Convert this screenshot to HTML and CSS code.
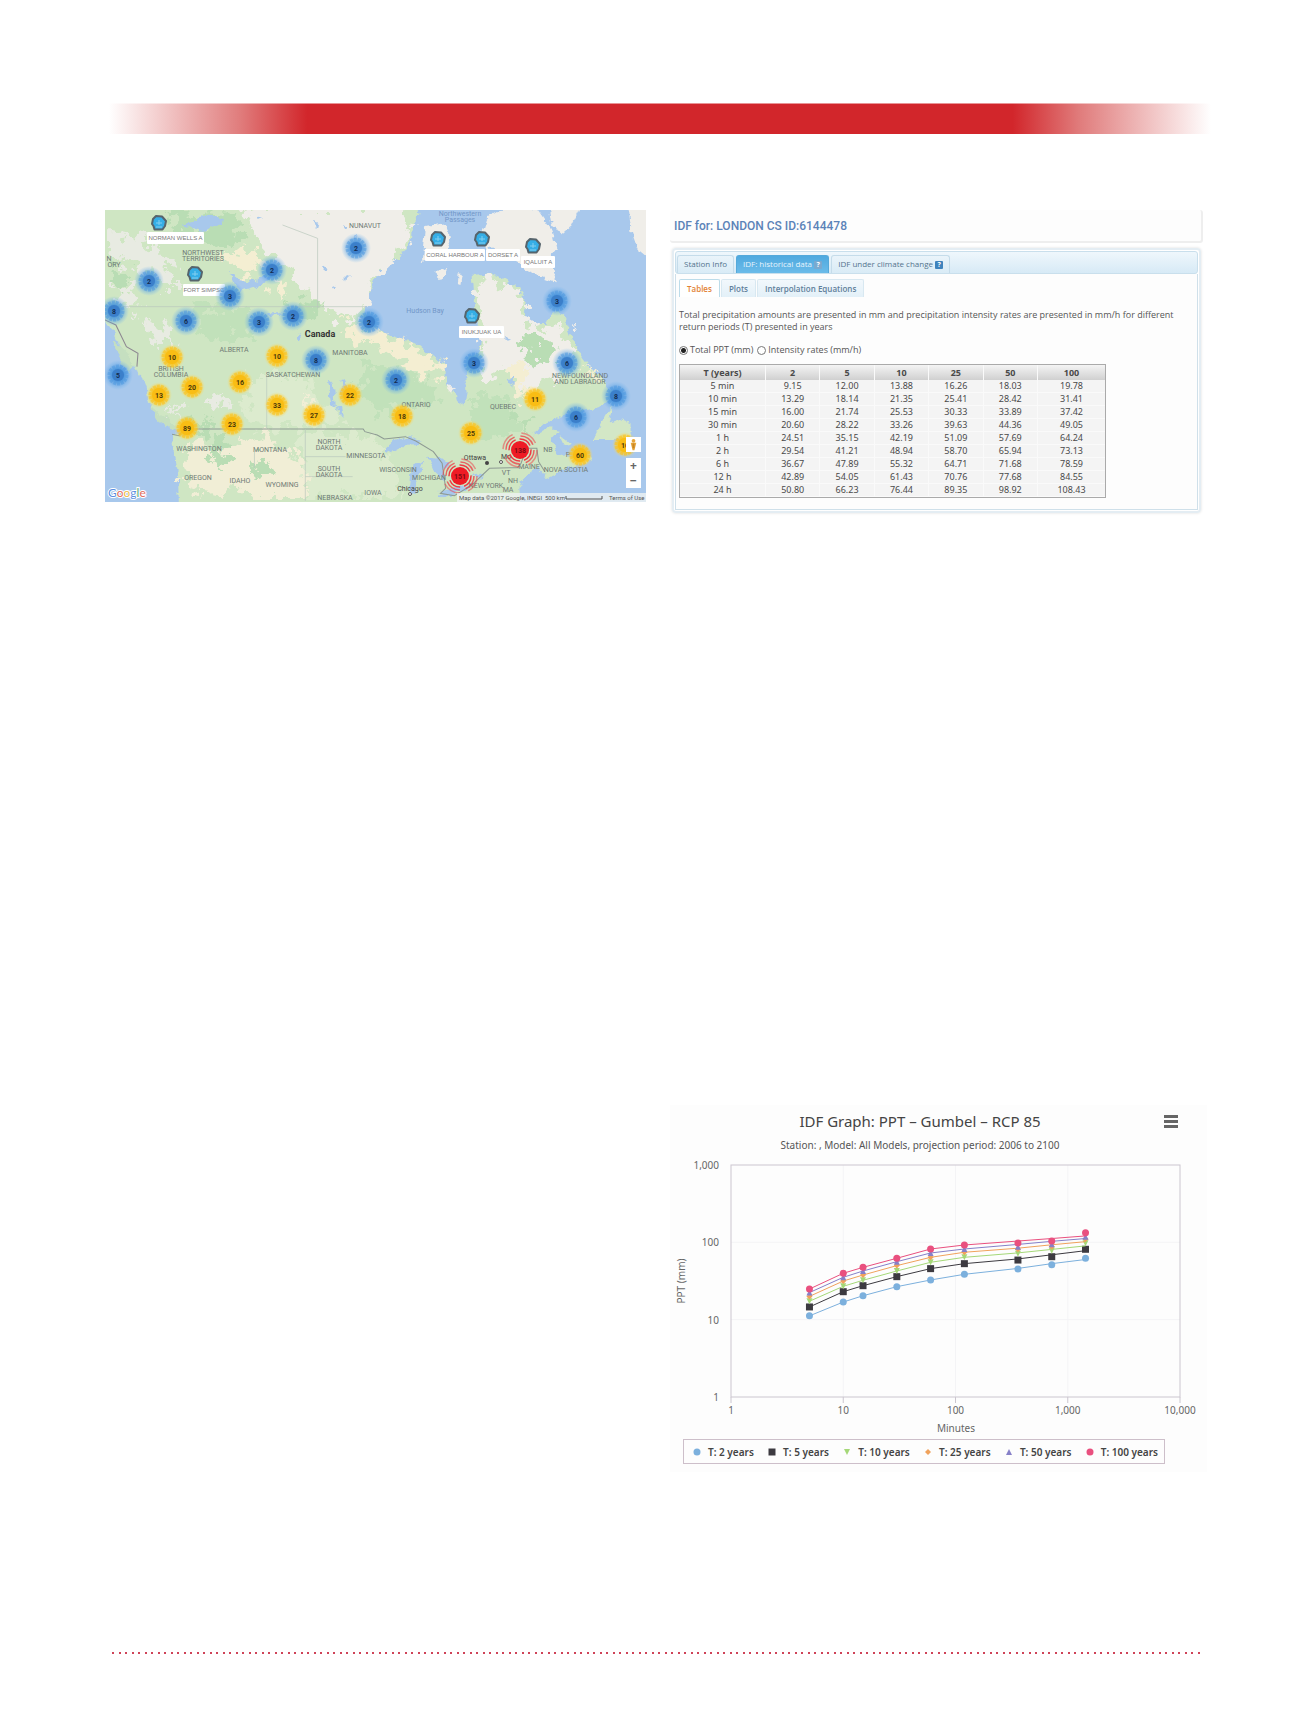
FILE: index.html
```
<!DOCTYPE html>
<html lang="en">
<head>
    <meta charset="utf-8">
    <title>IDF Tool</title>
    <link rel="stylesheet" href="styles.css">
</head>
<body>
    <div class="banner"></div>

    <main class="content">
        <div class="map">
            <svg class="map-canvas" id="map" viewBox="0 0 541 292" role="img" aria-label="Station map">
                <defs>
                    <filter id="rough" x="0" y="0" width="100%" height="100%">
                        <feTurbulence type="fractalNoise" baseFrequency="0.12" numOctaves="3" seed="4"/>
                        <feDisplacementMap in="SourceGraphic" scale="9" xChannelSelector="R" yChannelSelector="G"/>
                    </filter>
                    <filter id="patchy" x="0" y="0" width="100%" height="100%">
                        <feTurbulence type="fractalNoise" baseFrequency="0.09" numOctaves="4" seed="9"/>
                        <feDisplacementMap in="SourceGraphic" scale="34" xChannelSelector="R" yChannelSelector="G"/>
                        <feGaussianBlur stdDeviation="0.5"/>
                    </filter>
                    <radialGradient id="glow-blue">
                        <stop offset="0.4" stop-color="#3f8fdb" stop-opacity="0.9"/>
                        <stop offset="1" stop-color="#6fb4f0" stop-opacity="0"/>
                    </radialGradient>
                    <radialGradient id="glow-yellow">
                        <stop offset="0.5" stop-color="#fbc31c"/>
                        <stop offset="1" stop-color="#fcd95c" stop-opacity="0"/>
                    </radialGradient>
                </defs>

                <rect width="541" height="292" fill="#a8c8ec"/>

                <g filter="url(#rough)">
                    <g transform="scale(.3508 .3333) translate(-14 -15)">
                        <path fill="#cfe6c3" d="M-20 -20H880L915 25L890 60L885 110L860 150L820 180L790 210L770 255L755 300L760 345L800 378L850 405L900 415L940 450L985 480L985 540L1012 560L1022 600L1042 595L1048 560L1040 510L1046 460L1082 440L1090 395L1070 350L1068 280L1062 210L1110 205L1150 225L1190 250L1215 285L1208 325L1235 360L1272 360L1300 318L1325 340L1342 390L1362 440L1392 480L1430 520L1475 570L1440 600L1390 615L1310 635L1255 660L1232 695L1280 668L1310 675L1285 705L1300 740L1340 760L1395 745L1400 765L1330 790L1275 822L1250 785L1215 810L1195 850L1200 920H225L222 800L208 730L205 690L240 688L190 650L140 600L130 540L100 490L60 430L35 370L-20 330Z"/>
                        <path fill="#f0eee9" d="M1100 40L1150 10H1245L1290 80L1302 130L1280 160L1302 232L1240 208L1190 170L1110 130L1085 90ZM1280 0H1372L1345 60L1310 92L1290 60ZM1505 0H1600V200L1535 140L1515 80ZM930 62L985 55L1000 90L985 150L920 165ZM950 205L990 188L972 225ZM1022 208L1034 210L1030 234L1020 230ZM990 540L1015 548L1000 560Z"/>
                        <path fill="#d3e7c6" d="M1462 600L1440 630L1405 705L1480 705L1515 690L1515 655L1480 640L1450 650ZM1310 690L1345 720L1325 725Z"/>
                        <path fill="#c5dfc0" d="M35 400L75 440L100 490L80 500L50 450ZM145 605L190 640L235 680L200 672L160 640Z"/>
                    </g>
                </g>

                <g filter="url(#patchy)">
                    <g transform="scale(.3508 .3333) translate(-14 -15)">
                        <path fill="#f0eee9" d="M410 0H870L880 110L850 150L790 210L765 255L745 345L690 350L640 310L580 260L520 180L450 100ZM1075 225L1110 215L1150 240L1200 270L1205 330L1240 375L1290 360L1320 350L1340 430L1360 470L1290 520L1220 560L1170 490L1100 520L1060 500L1100 440L1085 350Z"/>
                        <path fill="#e8ebe2" d="M20 80L110 90L150 130L200 180L230 240L170 240L110 180L60 160L20 150ZM40 240L110 270L100 300L50 290ZM110 330L190 370L220 420L160 420ZM310 560L370 580L350 620L310 600ZM190 600L240 630L220 640Z"/>
                        <path fill="#f4eed2" d="M345 140L440 145L470 200L440 222L390 200ZM490 225L530 235L520 290L500 260ZM690 360L770 365L860 410L970 475L975 510L890 500L780 420L700 400ZM1170 470L1220 480L1210 590L1180 580ZM1370 480L1430 525L1400 520Z"/>
                        <path fill="#dcebce" d="M420 510L560 510L640 590L700 660L420 665ZM560 690L760 690L850 780L850 880L600 880Z"/>
                        <path fill="#f1eed6" d="M250 710L330 720L400 730L420 700L470 690L560 760L590 800L585 885L450 885L400 850L300 870L250 850L240 780ZM560 560L620 600L600 620Z"/>
                        <path fill="#b9ddb4" d="M200 20L390 30L400 110L330 130L290 90L220 80ZM20 180L80 190L90 240L30 240ZM320 690L360 690L350 780L310 760ZM430 760L480 770L470 830L430 820ZM1190 410L1280 400L1300 460L1230 480ZM540 290L640 300L620 340L560 330ZM240 640L320 650L300 690L240 680ZM1180 640L1240 640L1210 690Z"/>
                        <path fill="#c1e1ba" d="M760 470L940 520L960 600L800 620L740 560ZM1060 560L1170 580L1190 680L1060 700ZM260 300L440 310L420 400L280 400Z"/>
                    </g>
                </g>

                <!-- lakes -->
                <g filter="url(#rough)">
                    <g transform="scale(.3508 .3333) translate(-14 -15)" fill="#a8c8ec">
                        <path d="M235 60L280 45L290 30L335 30L350 55L320 65L300 80L260 68ZM370 200L400 225L440 232L470 205L490 215L450 245L405 260L385 240ZM650 520L665 530L672 600L660 610ZM685 520L700 530L705 575L690 570ZM675 600L690 610L695 640L680 630ZM810 735L840 705L880 690L915 700L910 720L870 722L830 745ZM885 790L925 765L915 790L905 830L900 870L880 865ZM935 755L975 760L1000 780L975 800L985 830L955 800ZM965 860L1010 850L1065 830L1050 850L1000 870L970 880ZM1060 815L1100 800L1090 818Z"/>
                        <path d="M480 325H520V332H480ZM560 395L575 380L570 405ZM640 180L650 195L636 200ZM690 60L705 70L695 78ZM610 50L625 58L615 66ZM700 210L712 218L700 226ZM780 260L770 270ZM1165 520L1180 515L1178 545ZM1150 395L1175 400L1160 405ZM450 35L465 42L452 48ZM720 90L732 96L724 102ZM660 240L670 245L664 252Z"/>
                    </g>
                </g>

                <!-- national and provincial borders -->
                <g transform="scale(.3508 .3333) translate(-14 -15)" fill="none" stroke="#8e9a93" stroke-width="3">
                    <path d="M205 688L225 692L240 672H750L755 680L790 690L810 702L870 695L900 708L950 740L975 775L985 850L970 865L1010 872L1060 840L1110 790L1190 788L1200 775L1215 730H1245L1250 770L1268 800"/>
                    <path d="M14 345L45 360L75 425L108 445L105 485" stroke="#8d8791"/>
                </g>
                <g transform="scale(.3508 .3333) translate(-14 -15)" fill="none" stroke="#b9c7bb" stroke-width="2">
                    <path d="M20 305H760M475 510V670M585 672V888M585 755H700M585 815H720M440 790V740M620 310V100L520 60"/>
                </g>

                <g id="map-labels"></g>
                <g id="stations"></g>
                <g id="clusters"></g>

                <g class="map-credit">
                    <rect x="352" y="283" width="189" height="9" fill="#eef3f3" opacity="0.8"/>
                    <text x="354" y="290">Map data ©2017 Google, INEGI</text>
                    <text x="440" y="290">500 km</text>
                    <path d="M461 286V289H497V286" fill="none" stroke="#555"/>
                    <text x="504" y="290">Terms of Use</text>
                </g>
                <text class="google" x="3" y="287"><tspan fill="#5b8fe0">G</tspan><tspan fill="#e2695c">o</tspan><tspan fill="#eebb45">o</tspan><tspan fill="#5b8fe0">g</tspan><tspan fill="#5fae73">l</tspan><tspan fill="#e2695c">e</tspan></text>
            </svg>
            <div class="map-controls">
                <button class="map-btn pegman" aria-label="Street View">
                    <svg viewBox="0 0 16 16"><circle cx="8" cy="4" r="2" fill="#e6a53a"/><path d="M5 6h6l-1 4-1 4H7L6 10z" fill="#e6a53a"/><path d="M7 7h2v5H7z" fill="#c98522"/></svg>
                </button>
                <div class="zoom">
                    <button class="map-btn" aria-label="Zoom in">+</button>
                    <button class="map-btn" aria-label="Zoom out">−</button>
                </div>
            </div>
        </div>

        <section class="idf">
            <div class="idf-title"><h2>IDF for: LONDON CS ID:6144478</h2></div>
            <div class="idf-panel">
                <div class="tabs">
                    <button class="tab">Station Info</button>
                    <button class="tab active">IDF: historical data <span class="help">?</span></button>
                    <button class="tab">IDF under climate change <span class="help">?</span></button>
                </div>
                <div class="idf-body">
                    <div class="subtabs">
                        <button class="subtab active">Tables</button>
                        <button class="subtab">Plots</button>
                        <button class="subtab">Interpolation Equations</button>
                    </div>
                    <p>Total precipitation amounts are presented in mm and precipitation intensity rates are presented in mm/h for different return periods (T) presented in years</p>
                    <div class="units">
                        <label><input type="radio" name="unit" checked>Total PPT (mm)</label>
                        <label><input type="radio" name="unit">Intensity rates (mm/h)</label>
                    </div>
                    <table>
                        <thead>
                            <tr><th class="first">T (years)</th><th>2</th><th>5</th><th>10</th><th>25</th><th>50</th><th class="last">100</th></tr>
                        </thead>
                        <tbody>
                            <tr><td>5 min</td><td>9.15</td><td>12.00</td><td>13.88</td><td>16.26</td><td>18.03</td><td>19.78</td></tr>
                            <tr><td>10 min</td><td>13.29</td><td>18.14</td><td>21.35</td><td>25.41</td><td>28.42</td><td>31.41</td></tr>
                            <tr><td>15 min</td><td>16.00</td><td>21.74</td><td>25.53</td><td>30.33</td><td>33.89</td><td>37.42</td></tr>
                            <tr><td>30 min</td><td>20.60</td><td>28.22</td><td>33.26</td><td>39.63</td><td>44.36</td><td>49.05</td></tr>
                            <tr><td>1 h</td><td>24.51</td><td>35.15</td><td>42.19</td><td>51.09</td><td>57.69</td><td>64.24</td></tr>
                            <tr><td>2 h</td><td>29.54</td><td>41.21</td><td>48.94</td><td>58.70</td><td>65.94</td><td>73.13</td></tr>
                            <tr><td>6 h</td><td>36.67</td><td>47.89</td><td>55.32</td><td>64.71</td><td>71.68</td><td>78.59</td></tr>
                            <tr><td>12 h</td><td>42.89</td><td>54.05</td><td>61.43</td><td>70.76</td><td>77.68</td><td>84.55</td></tr>
                            <tr><td>24 h</td><td>50.80</td><td>66.23</td><td>76.44</td><td>89.35</td><td>98.92</td><td>108.43</td></tr>
                        </tbody>
                    </table>
                </div>
            </div>
        </section>

        <section class="chart">
            <button class="chart-menu" aria-label="Chart menu"><span></span><span></span><span></span></button>
            <h3>IDF Graph: PPT – Gumbel – RCP 85</h3>
            <p class="subtitle">Station: , Model: All Models, projection period: 2006 to 2100</p>
            <svg class="plot" id="plot" viewBox="0 0 537 280" role="img" aria-label="IDF graph"></svg>
            <ul class="legend" id="legend"></ul>
        </section>
    </main>

    <footer class="dots"></footer>

    <script src="script.js"></script>
</body>
</html>
```
FILE: styles.css
```
* {
    margin: 0;
    padding: 0;
    box-sizing: border-box;
}

body {
    font-family: "Open Sans", "Noto Sans", sans-serif;
    background: #fff;
    color: #555;
    padding: 103px 92px 0 105px;
}

button {
    font: inherit;
    color: inherit;
    border: none;
    background: none;
    cursor: pointer;
}

.banner {
    height: 31px;
    margin: 0 -4px 76px 4px;
    border-top: 1px solid rgba(255, 255, 255, 0.5);
    background: linear-gradient(90deg, #fff, #e07b7b 12%, #d2262b 18%, #d2262b 82%, #e07b7b 88%, #fff);
}

.content {
    display: grid;
    grid-template-columns: 541fr 537fr;
    column-gap: 24px;
    row-gap: 592px;
    align-items: start;
}

/* Map */
.map {
    position: relative;
    overflow: hidden;
}

.map-canvas {
    display: block;
    width: 100%;
    font-family: Roboto, sans-serif;
}

.map-label {
    font-size: 7px;
    fill: #6f7a75;
    text-anchor: middle;
}

.map-label.city {
    fill: #444;
}

.map-label.country {
    font-size: 9px;
    font-weight: bold;
    fill: #333;
}

.map-label.water {
    fill: #7297c8;
}

.cluster {
    font-size: 7px;
    font-weight: bold;
    text-anchor: middle;
}

.station {
    font-family: "Liberation Sans", sans-serif;
    font-size: 6px;
    fill: #777;
    text-anchor: middle;
}

.map-credit {
    font-size: 6px;
    fill: #555;
}

.google {
    font-family: Lato, sans-serif;
    font-size: 12px;
    stroke: #fff;
    stroke-width: 2px;
    paint-order: stroke;
}

.map-controls {
    position: absolute;
    right: 5px;
    bottom: 14px;
    display: flex;
    flex-direction: column;
    gap: 6px;
}

.map-btn {
    display: block;
    width: 15px;
    height: 15px;
    line-height: 15px;
    background: #fff;
    font-size: 12px;
    font-weight: bold;
    color: #666;
    text-align: center;
}

.pegman svg {
    display: block;
}

/* Station panel */
.idf-title {
    height: 33px;
    padding: 6px 4px;
    margin-right: 4px;
    background: #fdfdfd;
    border-right: 2px solid #eee;
    border-bottom: 2px solid #eee;
    border-radius: 3px;
}

.idf-title h2 {
    font-family: Roboto, sans-serif;
    font-size: 12px;
    font-weight: 500;
    line-height: 20px;
    color: #5b83b8;
}

.idf-panel {
    margin: 5px 6px 0 2px;
    border: 2px solid #e4edf3;
    border-radius: 4px;
    box-shadow: 0 0 3px #ddd;
    padding: 1px;
}

.tabs {
    display: flex;
    gap: 2px;
    height: 23px;
    padding: 3px 1px 0;
    background: linear-gradient(#eff7fc, #d7eaf6);
    border: 1px solid #c9dfec;
    border-radius: 3px;
    font-size: 8px;
    color: #54748e;
}

.tab {
    padding: 0 6px 3px;
    border: 1px solid #c5dcea;
    border-bottom: none;
    border-radius: 3px 3px 0 0;
    background: linear-gradient(#eaf4fa, #d9ebf6);
    white-space: nowrap;
}

.tab.active {
    background: linear-gradient(#4fa9df, #6bbbe9);
    border-color: #55a9da;
    color: #e5f4fd;
}

.help {
    display: inline-block;
    width: 8px;
    height: 8px;
    line-height: 8px;
    border-radius: 1px;
    background: #3f83bd;
    color: #fff;
    font-size: 7px;
    font-weight: bold;
    text-align: center;
}

.tab.active .help {
    background: #7aa9cf;
}

.idf-body {
    padding: 5px 7px 11px 3px;
    border: 1px solid #cfe0ea;
    border-top: none;
    background: #fdfdfd;
}

.subtabs {
    display: flex;
    gap: 1px;
    margin-bottom: 12px;
    font-size: 8px;
    font-weight: 600;
    color: #5f7f9b;
}

.subtab {
    height: 18px;
    padding: 0 7px;
    border: 1px solid #d8e8f1;
    border-bottom: none;
    border-radius: 2px 2px 0 0;
    background: linear-gradient(#f2f8fc, #e3f0f8);
}

.subtab.active {
    background: #fff;
    border-color: #bcdcea;
    color: #e28234;
}

.idf-body p {
    font-size: 9px;
    line-height: 12px;
    margin-bottom: 11px;
}

.units {
    display: flex;
    gap: 4px;
    height: 12px;
    margin-bottom: 8px;
    font-size: 9px;
    line-height: 12px;
}

.units label {
    display: flex;
    align-items: center;
    gap: 2px;
}

.units input {
    appearance: none;
    width: 9px;
    height: 9px;
    border: 1px solid #777;
    border-radius: 50%;
    background: #fff;
}

.units input:checked {
    background: radial-gradient(#222 0 2px, #fff 3px);
}

table {
    width: 427px;
    max-width: 100%;
    table-layout: fixed;
    border: 1px solid #aaa;
    border-collapse: separate;
    border-spacing: 0;
    font-family: "Noto Sans", sans-serif;
    font-size: 9px;
    text-align: center;
    color: #4a4a4a;
}

th {
    height: 15px;
    line-height: 14px;
    background: linear-gradient(#f4f4f4, #d0d0d0);
}

.first {
    width: 20%;
}

.last {
    width: 16%;
}

td {
    height: 13px;
    line-height: 12px;
    background: #f4f4f4;
    border-bottom: 1px solid #fafafa;
}

td + td,
th + th {
    border-left: 1px solid #fafafa;
}

/* Chart */
.chart {
    grid-column: 2;
    position: relative;
    padding-top: 4px;
    font-family: "Noto Sans", sans-serif;
    background: #fdfdfd;
}

.chart h3 {
    padding-right: 37px;
    font-size: 15px;
    font-weight: normal;
    line-height: 24px;
    text-align: center;
    color: #444;
}

.subtitle {
    padding-right: 37px;
    font-size: 10px;
    line-height: 24px;
    text-align: center;
    color: #555;
}

.chart-menu {
    position: absolute;
    top: 10px;
    right: 29px;
    display: flex;
    flex-direction: column;
    gap: 2px;
    width: 14px;
}

.chart-menu span {
    height: 3px;
    background: #666;
}

.plot {
    display: block;
    width: 100%;
}

.plot text {
    font-size: 10px;
    fill: #666;
}

.legend {
    display: flex;
    justify-content: space-between;
    width: 482px;
    max-width: 100%;
    height: 25px;
    margin: 2px 0 8px 13px;
    padding: 0 6px 0 8px;
    border: 1px solid #cdbfca;
    list-style: none;
    font-size: 10px;
    font-weight: 600;
    color: #444;
}

.legend li {
    display: flex;
    align-items: center;
    gap: 6px;
}

.legend svg {
    width: 10px;
    height: 10px;
}

.dots {
    height: 2px;
    margin: 180px 4px 60px 7px;
    background: repeating-linear-gradient(90deg, #cf4358 0 2px, #fff 2px 7px, #cf4358 7px 9px, #fff 9px 13px);
}
```
FILE: script.js
```
const mapLabels = [
    ['NUNAVUT', 260, 18], ['NORTHWEST', 98, 45], ['TERRITORIES', 98, 51],
    ['ALBERTA', 129, 142], ['MANITOBA', 245, 145], ['SASKATCHEWAN', 188, 167],
    ['BRITISH', 66, 161], ['COLUMBIA', 66, 167], ['ONTARIO', 311, 197],
    ['QUEBEC', 398, 199], ['NEWFOUNDLAND', 475, 168], ['AND LABRADOR', 475, 174],
    ['WASHINGTON', 94, 241], ['MONTANA', 165, 242], ['NORTH', 224, 234],
    ['DAKOTA', 224, 240], ['SOUTH', 224, 261], ['DAKOTA', 224, 267],
    ['MINNESOTA', 261, 248], ['WISCONSIN', 293, 262], ['MICHIGAN', 324, 270],
    ['OREGON', 93, 270], ['IDAHO', 135, 273], ['WYOMING', 177, 277],
    ['NEBRASKA', 230, 290], ['IOWA', 268, 285], ['NEW YORK', 381, 278],
    ['MAINE', 424, 259], ['NOVA SCOTIA', 461, 262], ['NB', 443, 242],
    ['VT', 401, 265], ['NH', 408, 273], ['MA', 403, 282], ['P', 463, 247],
    ['N', 4, 51], ['ORY', 9, 57],
    ['Canada', 215, 127, 'country'], ['Ottawa', 370, 250, 'city'],
    ['Mo', 401, 249, 'city'], ['Chicago', 305, 281, 'city'],
    ['Northwestern', 355, 6, 'water'], ['Passages', 355, 12, 'water'],
    ['Hudson Bay', 320, 103, 'water']
];

const clusters = [
    [44, 71, 2], [9, 101, 8], [81, 111, 6], [125, 86, 3], [167, 60, 2],
    [154, 112, 3], [188, 106, 2], [251, 38, 2], [264, 112, 2], [452, 91, 3],
    [13, 165, 5], [211, 150, 8], [369, 153, 3], [462, 153, 6], [291, 170, 2],
    [511, 186, 8], [471, 207, 6],
    [67, 147, 10], [172, 146, 10], [54, 185, 13], [87, 177, 20], [135, 172, 16],
    [172, 195, 33], [245, 185, 22], [209, 205, 27], [127, 214, 23], [82, 218, 89],
    [297, 206, 18], [430, 189, 11], [366, 223, 25], [475, 245, 60], [520, 235, 10],
    [415, 240, 138], [355, 266, 151]
];

// icon x, icon y, name, label x, label y, label width
const stations = [
    [54, 13, 'NORMAN WELLS A', 42, 22, 57],
    [90, 64, 'FORT SIMPSO', 78, 74, 42],
    [333, 29, 'CORAL HARBOUR A', 320, 39, 60],
    [377, 29, 'DORSET A', 381, 39, 34],
    [428, 36, 'IQALUIT A', 416, 46, 34],
    [367, 106, 'INUKJUAK UA', 354, 116, 45]
];

function drawMap() {
    document.getElementById('map-labels').innerHTML = mapLabels.map(([name, x, y, kind]) =>
        `<text class="map-label ${kind || ''}" x="${x}" y="${y}">${name}</text>`
    ).join('') + '<circle cx="382" cy="253" r="2" fill="#444"/>' +
        '<circle cx="396" cy="252" r="1.5" fill="#fff" stroke="#555"/>' +
        '<circle cx="305" cy="284" r="1.5" fill="#fff" stroke="#555"/>';

    document.getElementById('stations').innerHTML = stations.map(([x, y, name, lx, ly, w]) => `
        <path d="M-3 -7L3 -6.5L7 -2L6 3L3.5 6.5H-4.5L-5.5 3L-7 1L-6 -4Z" transform="translate(${x} ${y})" fill="#35aee6" stroke="#56646c" stroke-width="2" stroke-linejoin="round"/>
        <path d="M-3 4H3M0 -3V2M-3 0H3" transform="translate(${x} ${y})" stroke="#84cff0"/>
        <rect x="${lx}" y="${ly}" width="${w}" height="12" rx="1" fill="#fff"/>
        <text class="station" x="${lx + w / 2}" y="${ly + 8}">${name}</text>`
    ).join('');

    document.getElementById('clusters').innerHTML = clusters.map(([x, y, n]) => {
        let shape;
        if (n > 100) {
            shape = `<circle r="9" fill="#ee1c25"/>
                <g fill="none" stroke="#ee3a43" stroke-width="1.5">
                    <circle r="11" stroke-dasharray="13 4"/>
                    <circle r="14" stroke-dasharray="16 6" opacity="0.75"/>
                    <circle r="17" stroke-dasharray="18 9" opacity="0.5"/>
                </g>`;
        } else if (n >= 10) {
            shape = `<circle r="13" fill="url(#glow-yellow)"/>
                <circle r="9" fill="none" stroke="#fbc31c" stroke-width="3" stroke-dasharray="3 1" opacity="0.6"/>
                <circle r="7" fill="#f9bd14"/>`;
        } else {
            shape = `<circle r="15" fill="url(#glow-blue)"/>
                <circle r="9" fill="none" stroke="#4c98df" stroke-width="3" stroke-dasharray="3 1" opacity="0.5"/>
                <circle r="6" fill="#3b7fca"/>`;
        }
        const color = n > 100 ? '#7c0a10' : n >= 10 ? '#4d3a08' : '#142c50';
        return `<g class="cluster" transform="translate(${x} ${y})">${shape}<text y="3" fill="${color}">${n}</text></g>`;
    }).join('');
}

const minutes = [5, 10, 15, 30, 60, 120, 360, 720, 1440];

// fit holds the curve values for the last three durations
const series = [
    { name: 'T: 2 years', color: '#7cb0dd', shape: 'circle', fit: [46, 53, 60],
      data: [11.2, 16.9, 20.4, 26.7, 32.6, 38.6, 45.2, 51.4, 62.2] },
    { name: 'T: 5 years', color: '#3c3a40', shape: 'square', fit: [61, 69, 78],
      data: [14.6, 23, 27.5, 36, 45.7, 53, 59, 65.2, 81.3] },
    { name: 'T: 10 years', color: '#a5d878', shape: 'down', fit: [73, 81, 90],
      data: [17.3, 27, 32.3, 42.6, 55.2, 64, 71.4, 78, 97.2] },
    { name: 'T: 25 years', color: '#f0a25c', shape: 'diamond', fit: [84, 93, 102],
      data: [20, 31.6, 37.8, 50, 64, 74.4, 81.3, 88, 110.5] },
    { name: 'T: 50 years', color: '#8680c8', shape: 'up', fit: [94, 103, 112],
      data: [22.4, 35.3, 42.6, 56.2, 72.8, 82, 88, 94.3, 118] },
    { name: 'T: 100 years', color: '#e9507f', shape: 'circle', fit: [104, 112, 121],
      data: [24.9, 39.8, 47.5, 62.2, 82, 92.4, 98, 104, 133] }
];

const shapes = {
    circle: 'M-3.5 0a3.5 3.5 0 1 0 7 0a3.5 3.5 0 1 0 -7 0z',
    square: 'M-3.5 -3.5h7v7h-7z',
    down: 'M-3 -3h6l-3 6z',
    up: 'M-3 3h6l-3 -6z',
    diamond: 'M0 -3l3 3l-3 3l-3 -3z'
};

function drawPlot() {
    const left = 61, right = 510, top = 8, bottom = 240;
    const px = v => left + Math.log10(v) / 4 * (right - left);
    const py = v => bottom - Math.log10(v) / 3 * (bottom - top);
    let out = '';

    [10, 100, 1000].forEach(v => {
        out += `<path d="M${px(v)} ${top}V${bottom}" stroke="#f4f4f6"/>`;
    });
    [10, 100].forEach(v => {
        out += `<path d="M${left} ${py(v)}H${right}" stroke="#f4f4f6"/>`;
    });
    out += `<rect x="${left}" y="${top}" width="${right - left}" height="${bottom - top}" fill="none" stroke="#cbc6cf"/>`;

    [1, 10, 100, 1000, 10000].forEach(v => {
        out += `<path d="M${px(v)} ${bottom}v6" stroke="#cbc6cf"/>
            <text x="${px(v)}" y="257" text-anchor="middle">${v.toLocaleString('en-US')}</text>`;
    });
    [1, 10, 100, 1000].forEach(v => {
        out += `<text x="49" y="${py(v) + 4}" text-anchor="end">${v.toLocaleString('en-US')}</text>`;
    });
    out += `<text x="286" y="275" text-anchor="middle">Minutes</text>
        <text transform="translate(15 124) rotate(-90)" text-anchor="middle">PPT (mm)</text>`;

    series.forEach(s => {
        const curve = s.data.slice(0, 6).concat(s.fit);
        const points = curve.map((v, i) => `${px(minutes[i])},${py(v)}`).join(' ');
        out += `<polyline points="${points}" fill="none" stroke="${s.color}"/>`;
        s.data.forEach((v, i) => {
            out += `<path d="${shapes[s.shape]}" transform="translate(${px(minutes[i])} ${py(v)})" fill="${s.color}"/>`;
        });
    });
    document.getElementById('plot').innerHTML = out;

    document.getElementById('legend').innerHTML = series.map(s =>
        `<li><svg viewBox="-5 -5 10 10"><path d="${shapes[s.shape]}" fill="${s.color}"/></svg>${s.name}</li>`
    ).join('');
}

drawMap();
drawPlot();
```
